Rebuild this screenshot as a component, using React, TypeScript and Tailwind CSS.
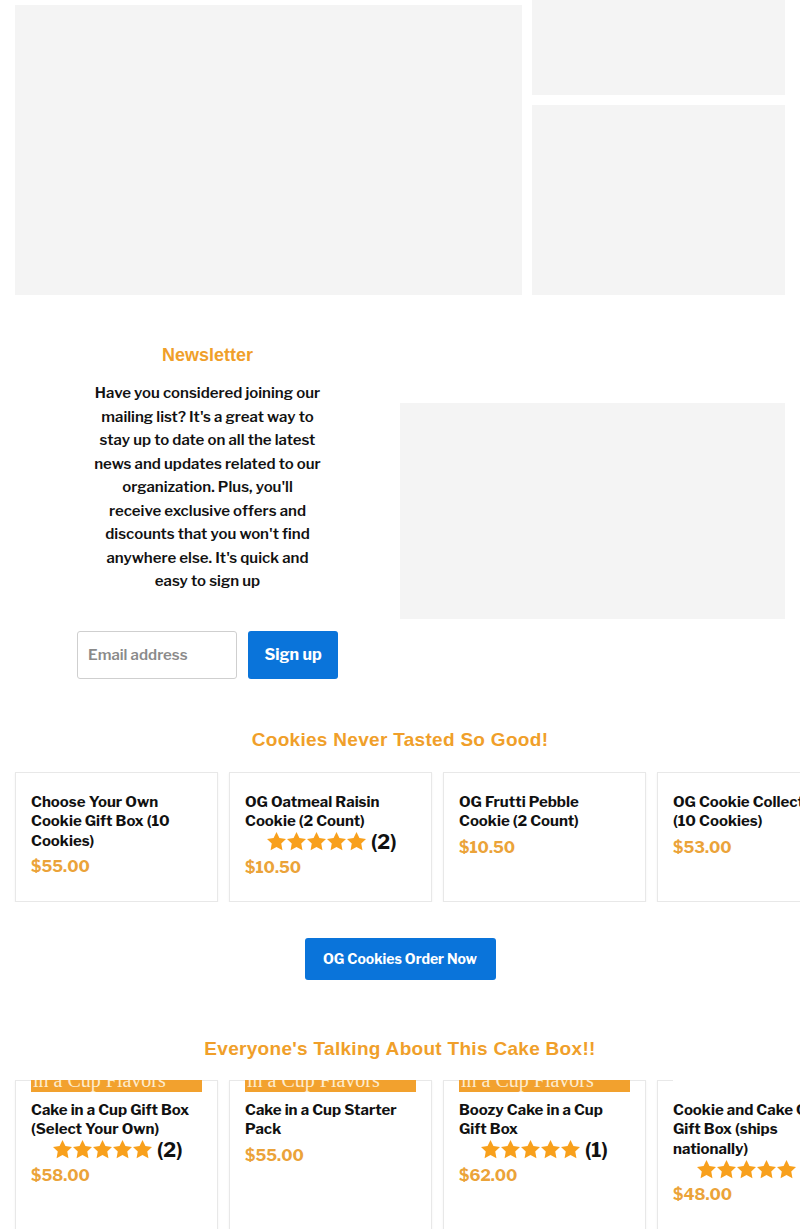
import React from "react";

const body = { fontFamily: '"Libre Franklin", Inter, "Noto Sans", sans-serif' };
const head = { fontFamily: '"Liberation Sans", Arial, sans-serif' };

function Star() {
  return (
    <svg viewBox="1.6 1.6 20.8 20.8" className="w-[19px] h-[19px] fill-[#f8a01c]">
      <path d="M12 1.6l3.2 6.6 7.2 1-5.2 5.1 1.3 7.2L12 18.1l-6.5 3.4 1.3-7.2L1.6 9.2l7.2-1z" />
    </svg>
  );
}

function Stars({ count, indent = "ml-[22px]" }: { count: number; indent?: string }) {
  return (
    <div className={`flex items-center h-[20px] ${indent}`}>
      <div className="flex gap-[1px]">
        <Star />
        <Star />
        <Star />
        <Star />
        <Star />
      </div>
      <span className="ml-[5px] text-[20px] font-bold text-[#111] leading-none whitespace-nowrap">({count})</span>
    </div>
  );
}

type Product = { title: string; price: string; reviews?: number; bar?: boolean; indent?: string };

const cookies: Product[] = [
  { title: "Choose Your Own Cookie Gift Box (10 Cookies)", price: "$55.00" },
  { title: "OG Oatmeal Raisin Cookie (2 Count)", price: "$10.50", reviews: 2 },
  { title: "OG Frutti Pebble Cookie (2 Count)", price: "$10.50" },
  { title: "OG Cookie Collection (10 Cookies)", price: "$53.00" },
];

const cakes: Product[] = [
  { title: "Cake in a Cup Gift Box (Select Your Own)", price: "$58.00", reviews: 2, bar: true },
  { title: "Cake in a Cup Starter Pack", price: "$55.00", bar: true },
  { title: "Boozy Cake in a Cup Gift Box", price: "$62.00", reviews: 1, bar: true },
  { title: "Cookie and Cake Cup Gift Box (ships nationally)", price: "$48.00", reviews: 3, indent: "ml-[24px]" },
];

function Card({ p, cake }: { p: Product; cake?: boolean }) {
  return (
    <div
      className={`w-[203px] shrink-0 bg-white border border-[#e8e8e8] shadow-[0_1px_2px_rgba(0,0,0,0.06)] px-[15px] ${
        cake ? "h-[170px]" : "h-[130px] pt-[20px]"
      }`}
    >
      {cake && (
        <div className={`-mt-[3px] h-[14px] overflow-hidden ${p.bar ? "bg-[#f2a12e]" : "bg-white"}`}>
          {p.bar && (
            <div
              className="-mt-[8px] pl-[2px] text-[20px] leading-[20px] text-[#fdeccf] whitespace-nowrap"
              style={{ fontFamily: '"Liberation Serif", serif' }}
            >
              in a Cup Flavors
            </div>
          )}
        </div>
      )}
      <div className={`text-[15px] leading-[19.5px] font-bold text-[#111] ${cake ? "mt-[9px]" : ""}`}>{p.title}</div>
      {p.reviews && <Stars count={p.reviews} indent={p.indent} />}
      <div className="mt-[5px] text-[16px] leading-[22px] font-bold text-[#eba339]">{p.price}</div>
    </div>
  );
}

export default function App() {
  return (
    <div className="bg-white w-[800px] overflow-hidden" style={body}>
      <div className="flex gap-[10px] px-[15px]">
        <div className="w-[507px] h-[290px] mt-[5px] bg-[#f4f4f4]" />
        <div className="w-[253px] flex flex-col gap-[10px]">
          <div className="h-[95px] bg-[#f4f4f4]" />
          <div className="h-[190px] bg-[#f4f4f4]" />
        </div>
      </div>

      <div className="grid grid-cols-2 items-center px-[15px] pt-[49px]">
        <div className="flex flex-col items-center">
          <h2 className="text-[18px] leading-[22px] font-bold text-[#f09f2a]" style={head}>
            Newsletter
          </h2>
          <p className="mt-[16px] w-[240px] text-center text-[15px] leading-[23.5px] font-semibold text-[#111]">
            Have you considered joining our
            <br />
            mailing list? It's a great way to
            <br />
            stay up to date on all the latest
            <br />
            news and updates related to our
            <br />
            organization. Plus, you'll
            <br />
            receive exclusive offers and
            <br />
            discounts that you won't find
            <br />
            anywhere else. It's quick and
            <br />
            easy to sign up
          </p>
          <div className="mt-[37px] flex gap-[11px]">
            <input
              placeholder="Email address"
              className="w-[160px] h-[48px] px-[10px] border border-[#cfcfcf] rounded-[3px] text-[15px] font-semibold placeholder:text-[#8a8a8a] outline-none"
            />
            <button className="w-[90px] h-[48px] rounded-[3px] bg-[#0a74da] text-white text-[16px] font-bold">
              Sign up
            </button>
          </div>
        </div>
        <div className="h-[216px] bg-[#f4f4f4]" />
      </div>

      <h2
        className="mt-[49px] text-center text-[19px] leading-[24px] font-bold tracking-[0.3px] text-[#f09f2a]"
        style={head}
      >
        Cookies Never Tasted So Good!
      </h2>
      <div className="mt-[20px] flex gap-[11px] pl-[15px] overflow-hidden">
        {cookies.map((p) => (
          <Card key={p.title} p={p} />
        ))}
      </div>
      <div className="mt-[36px] flex justify-center">
        <button className="w-[191px] h-[42px] rounded-[3px] bg-[#0a74da] text-white text-[14px] font-bold">
          OG Cookies Order Now
        </button>
      </div>

      <h2
        className="mt-[57px] text-center text-[19px] leading-[24px] font-bold tracking-[0.3px] text-[#f09f2a]"
        style={head}
      >
        Everyone's Talking About This Cake Box!!
      </h2>
      <div className="mt-[19px] flex gap-[11px] pl-[15px] overflow-hidden">
        {cakes.map((p) => (
          <Card key={p.title} p={p} cake />
        ))}
      </div>
    </div>
  );
}
